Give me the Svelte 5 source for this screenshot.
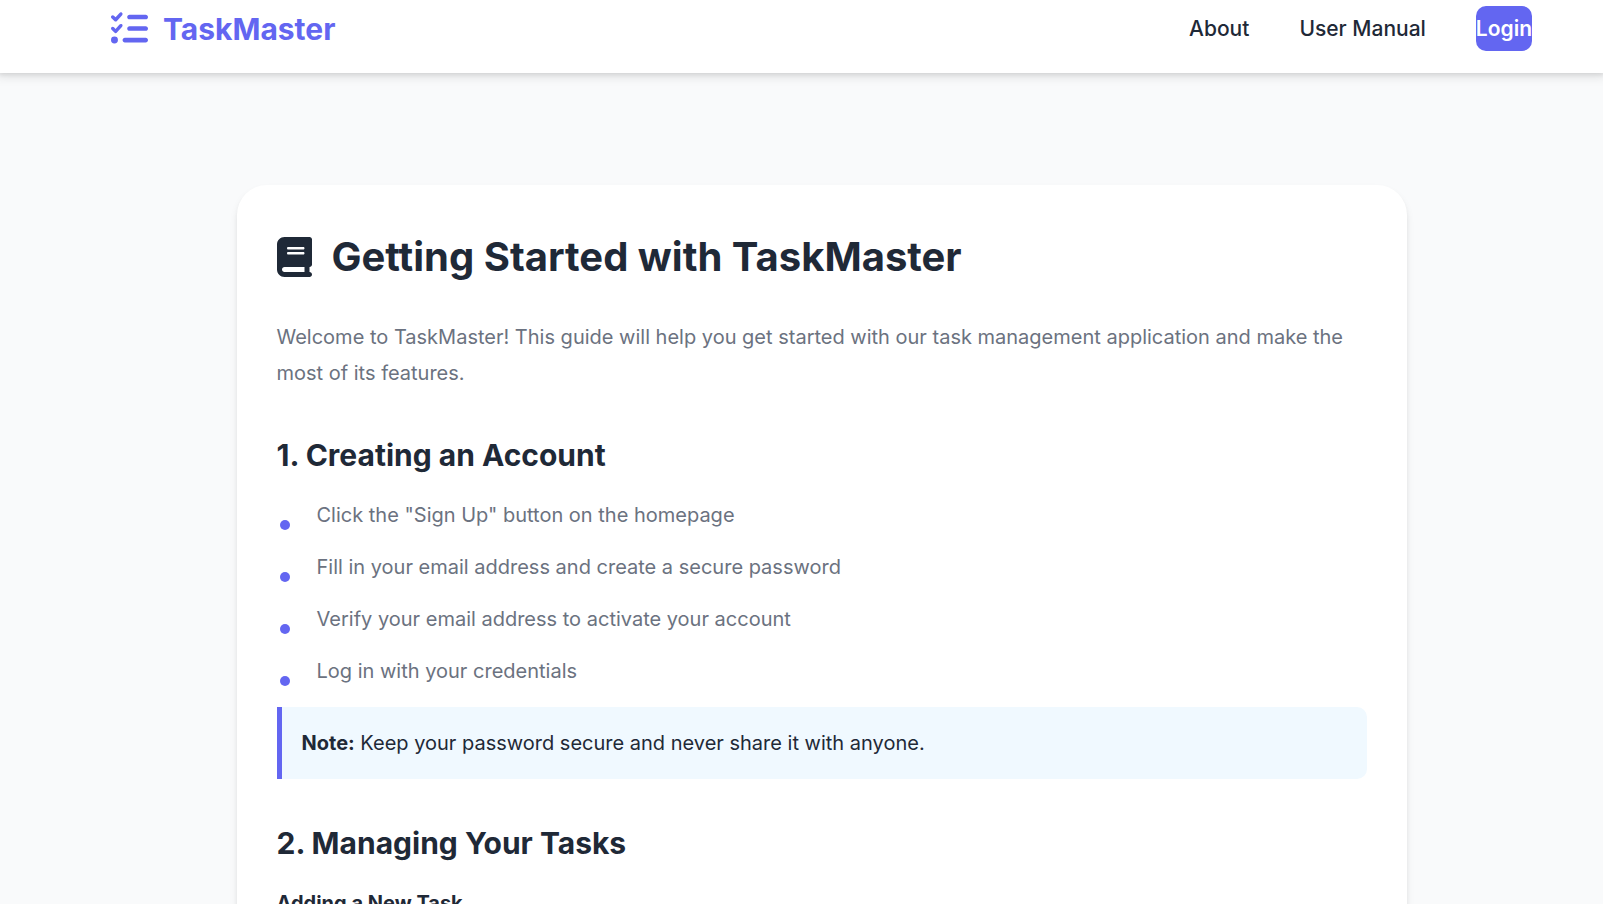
<script>
  const accountSteps = [
    'Click the "Sign Up" button on the homepage',
    'Fill in your email address and create a secure password',
    'Verify your email address to activate your account',
    'Log in with your credentials'
  ];
</script>

<header>
  <a class="brand" href="#home">
    <svg class="brand-icon" viewBox="0 0 512 512" aria-hidden="true">
      <path d="M152.1 38.2c9.9 8.9 10.7 24 1.8 33.9l-72 80c-4.4 4.9-10.6 7.8-17.2 7.9s-12.9-2.4-17.6-7L7 113C-2.3 103.6-2.3 88.4 7 79s24.6-9.4 33.9 0l22.1 22.1 55.1-61.2c8.9-9.9 24-10.7 33.9-1.8zm0 160c9.9 8.9 10.7 24 1.8 33.9l-72 80c-4.4 4.9-10.6 7.8-17.2 7.9s-12.9-2.4-17.6-7L7 273c-9.4-9.4-9.4-24.6 0-33.9s24.6-9.4 33.9 0l22.1 22.1 55.1-61.2c8.9-9.9 24-10.7 33.9-1.8zM224 96c0-17.7 14.3-32 32-32H480c17.7 0 32 14.3 32 32s-14.3 32-32 32H256c-17.7 0-32-14.3-32-32zm0 160c0-17.7 14.3-32 32-32H480c17.7 0 32 14.3 32 32s-14.3 32-32 32H256c-17.7 0-32-14.3-32-32zM160 416c0-17.7 14.3-32 32-32H480c17.7 0 32 14.3 32 32s-14.3 32-32 32H192c-17.7 0-32-14.3-32-32zM48 368a48 48 0 1 1 0 96 48 48 0 1 1 0-96z" />
    </svg>
    <span>TaskMaster</span>
  </a>
  <nav>
    <a href="#about">About</a>
    <a href="#manual">User Manual</a>
    <a class="login" href="#login">Login</a>
  </nav>
</header>

<main>
  <article>
    <h1>
      <svg class="book" viewBox="0 0 448 512" aria-hidden="true">
        <path d="M96 0C43 0 0 43 0 96V416c0 53 43 96 96 96H384h32c17.7 0 32-14.3 32-32s-14.3-32-32-32V384c17.7 0 32-14.3 32-32V32c0-17.7-14.3-32-32-32H384 96zm0 384H352v64H96c-17.7 0-32-14.3-32-32s14.3-32 32-32zm32-240c0-8.8 7.2-16 16-16H336c8.8 0 16 7.2 16 16s-7.2 16-16 16H144c-8.8 0-16-7.2-16-16zm16 48H336c8.8 0 16 7.2 16 16s-7.2 16-16 16H144c-8.8 0-16-7.2-16-16s7.2-16 16-16z" />
      </svg>
      <span>Getting Started with TaskMaster</span>
    </h1>
    <p>
      Welcome to TaskMaster! This guide will help you get started with our task management
      application and make the most of its features.
    </p>

    <h2>1. Creating an Account</h2>
    <ul>
      {#each accountSteps as step}
        <li>{step}</li>
      {/each}
    </ul>
    <div class="note"><strong>Note:</strong> Keep your password secure and never share it with anyone.</div>

    <h2>2. Managing Your Tasks</h2>
    <h3>Adding a New Task</h3>
  </article>
</main>

<style>
  :global(body) {
    background: #f9fafb;
    color: #1f2937;
    font-family: Inter, sans-serif;
    font-size: 20px;
    line-height: 36px;
  }

  :global(html) {
    height: 100%;
    overflow: hidden;
  }

  header {
    display: flex;
    align-items: center;
    justify-content: space-between;
    padding: 6px 71px 22px 111px;
    background: #fff;
    box-shadow: 0 1px 10px 3px rgba(0, 0, 0, 0.1), 0 1px 4px 1px rgba(0, 0, 0, 0.08);
  }

  a {
    color: inherit;
    text-decoration: none;
  }

  .brand {
    display: flex;
    align-items: center;
    gap: 15px;
    color: #6366f1;
    font-size: 30px;
    font-weight: 700;
  }

  svg {
    flex: none;
    fill: currentColor;
  }

  .brand-icon {
    width: 37px;
    height: 37px;
  }

  nav {
    display: flex;
    align-items: center;
    gap: 50px;
    font-size: 21px;
    font-weight: 500;
    line-height: 45px;
  }

  .login {
    border-radius: 10px;
    background: #6366f1;
    color: #fff;
    font-weight: 600;
  }

  main {
    padding: 112px 0 40px 40px;
  }

  article {
    box-sizing: border-box;
    max-width: 1170px;
    margin: 0 auto;
    padding: 40px;
    border-radius: 30px;
    background: #fff;
    box-shadow: 0 5px 8px -1px rgba(0, 0, 0, 0.1), 0 3px 5px -1px rgba(0, 0, 0, 0.06);
  }

  h1 {
    display: flex;
    align-items: center;
    gap: 20px;
    margin: 0 0 30px;
    font-size: 40px;
    line-height: 64px;
  }

  .book {
    width: 35px;
    height: 40px;
  }

  p {
    margin: 0;
    color: #6b7280;
  }

  h2 {
    margin: 40px 0 18px;
    font-size: 30px;
    line-height: 48px;
  }

  h3 {
    margin: 0;
    font-size: 20px;
  }

  ul {
    display: grid;
    gap: 16px;
    margin: 0 0 18px;
    padding: 0;
    list-style: none;
    color: #6b7280;
  }

  li {
    display: flex;
    align-items: flex-start;
  }

  li::before {
    content: '';
    flex: none;
    width: 10px;
    height: 10px;
    margin: 23px 27px 0 3px;
    border-radius: 50%;
    background: #6366f1;
  }

  .note {
    padding: 18px 20px;
    border-left: 5px solid #6366f1;
    border-radius: 0 10px 10px 0;
    background: #f0f9ff;
  }
</style>
